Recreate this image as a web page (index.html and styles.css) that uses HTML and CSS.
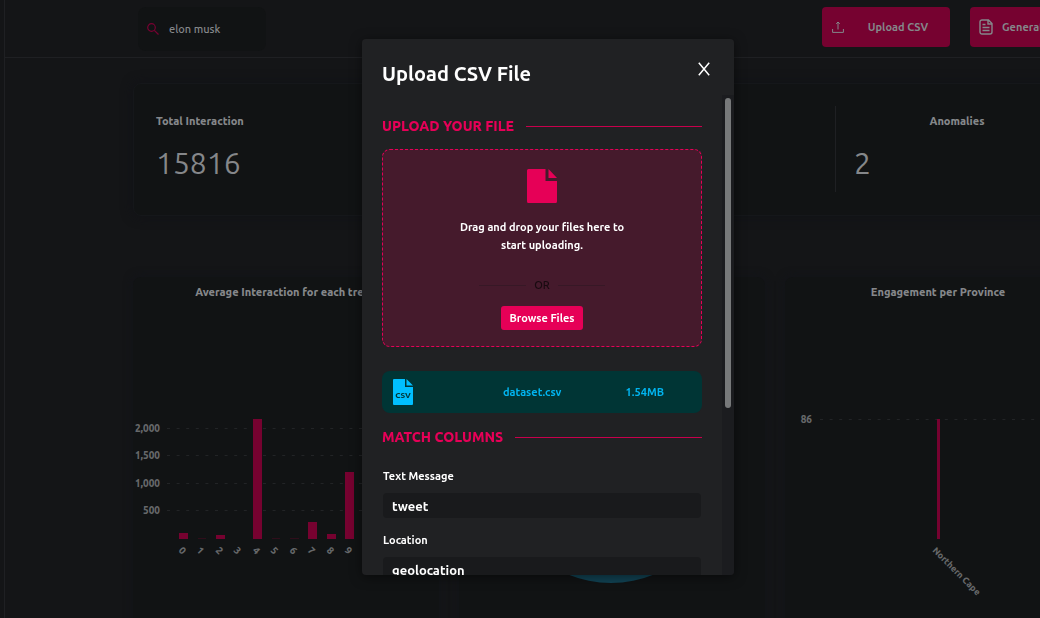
FILE: index.html
```html
<!DOCTYPE html>
<html lang="en">
<head>
<meta charset="utf-8">
<title>Upload CSV File</title>
<link rel="stylesheet" href="styles.css">
</head>
<body>
<div class="app">
  <aside class="rail"></aside>
  <div class="page">
    <header class="topbar">
      <label class="search">
        <svg class="search-icon" viewBox="0 0 12 12" aria-hidden="true"><circle cx="4.5" cy="4.5" r="3.8"/><path d="M7.3 7.3L11.5 11.5"/></svg>
        <input class="search-input" type="text" value="elon musk" aria-label="Search">
      </label>
      <div class="actions">
        <button class="action action-upload" type="button">
          <svg class="upload-icon" viewBox="0 0 12 12" aria-hidden="true"><path d="M.6 8v3.4h10.8V8M6 8.5V1M4.2 2.8L6 1l1.800 1.800"/></svg>
          <span class="action-label">Upload CSV</span>
        </button>
        <button class="action action-report" type="button">
          <svg class="report-icon" viewBox="0 0 14 16" aria-hidden="true"><path d="M3 1h6.500L13 4.500V13a2 2 0 0 1-2 2H3a2 2 0 0 1-2-2V3a2 2 0 0 1 2-2zM9 1v4h4M3.500 5.500h3M3.500 8.500h7M3.500 11.500h7"/></svg>
          <span>Generate Report</span>
        </button>
      </div>
    </header>
    <main class="dashboard">
      <section class="stats">
        <div class="stat"><h3 class="stat-title">Total Interaction</h3><p class="stat-value">15816</p></div>
        <div class="stat stat-anomalies"><h3 class="stat-title">Anomalies</h3><p class="stat-value">2</p></div>
      </section>
      <section class="charts">
        <article class="chart">
          <h3 class="chart-title">Average Interaction for each trend</h3>
          <svg class="plot" viewBox="0 0 306 300" aria-label="Average interaction bar chart">
            <path class="grid-line" d="M34 122.500H306M34 149.500H306M34 177.500H306M34 204.500H306"/>
            <g class="tick tick-end"><text x="27" y="126">2,000</text><text x="27" y="153">1,500</text><text x="27" y="181">1,000</text><text x="27" y="208">500</text></g>
            <path class="bar" d="M46 227h9v6h-9zM83 229h9v4h-9zM120 113h9v120h-9zM175 216h9v17h-9zM194 228h9v5h-9zM212 166h9v67h-9z"/>
            <path class="bar bar-low" d="M139 232h8v1h-8zM157 232h9v1h-9zM65 232h8v1h-8z"/>
            <g class="tick">
              <text transform="translate(45 245) rotate(45)">0</text><text transform="translate(63 245) rotate(45)">1</text><text transform="translate(82 245) rotate(45)">2</text><text transform="translate(100 245) rotate(45)">3</text><text transform="translate(119 245) rotate(45)">4</text><text transform="translate(137 245) rotate(45)">5</text><text transform="translate(156 245) rotate(45)">6</text><text transform="translate(174 245) rotate(45)">7</text><text transform="translate(193 245) rotate(45)">8</text><text transform="translate(211 245) rotate(45)">9</text>
            </g>
          </svg>
        </article>
        <article class="chart">
          <svg class="plot plot-pie" viewBox="0 0 306 340" aria-label="Sentiment pie chart"><circle class="pie" cx="152" cy="192" r="114"/></svg>
        </article>
        <article class="chart">
          <h3 class="chart-title">Engagement per Province</h3>
          <svg class="plot" viewBox="0 0 306 300" aria-label="Engagement per province bar chart">
            <path class="grid-line" d="M35 113.500H306"/>
            <g class="tick tick-end"><text x="27" y="117">86</text></g>
            <path class="bar" d="M152 113h3v120h-3z"/>
            <g class="tick tick-name"><text transform="translate(147 245) rotate(45)">Northern Cape</text></g>
          </svg>
        </article>
      </section>
    </main>
  </div>
</div>

<div class="overlay">
  <section class="modal" role="dialog" aria-modal="true" aria-labelledby="modal-title">
    <header class="modal-head">
      <h2 class="modal-title" id="modal-title">Upload CSV File</h2>
      <button class="close" type="button" aria-label="Close"><svg class="close-icon" viewBox="0 0 12 14" aria-hidden="true"><path d="M.8.8L11.2 13.2M11.2.8L.8 13.2"/></svg></button>
    </header>
    <div class="modal-body">
      <form class="modal-content">
        <h3 class="section-title">UPLOAD YOUR FILE</h3>
        <div class="dropzone">
          <svg class="file-icon" viewBox="0 0 30 34" aria-hidden="true"><path d="M1.500 0H18.500V12H30V32.500a1.500 1.500 0 0 1-1.500 1.500h-27A1.500 1.500 0 0 1 0 32.500v-31A1.500 1.500 0 0 1 1.500 0zM21.500 0L30 9h-8.500z"/></svg>
          <p class="drop-text">Drag and drop your files here to start uploading.</p>
          <div class="or">OR</div>
          <button class="browse" type="button">Browse Files</button>
        </div>
        <div class="file">
          <svg class="csv-icon" viewBox="0 0 20 26" aria-hidden="true"><path d="M1 0h11v8h8v17a1 1 0 0 1-1 1H1a1 1 0 0 1-1-1V1a1 1 0 0 1 1-1zM13.500 0L20 6.500h-6.500z"/><text class="csv-label" x="10" y="19">CSV</text></svg>
          <span class="file-name">dataset.csv</span>
          <span class="file-size">1.54MB</span>
        </div>
        <h3 class="section-title section-match">MATCH COLUMNS</h3>
        <div class="field"><label class="field-label" for="message">Text Message</label><select class="field-select" id="message"><option>tweet</option></select></div>
        <div class="field"><label class="field-label" for="location">Location</label><select class="field-select" id="location"><option>geolocation</option></select></div>
      </form>
      <div class="scroll-track"><div class="scroll-thumb"></div></div>
    </div>
  </section>
</div>
</body>
</html>
```
FILE: styles.css
```css
* { box-sizing: border-box; }
body {
  margin: 0;
  height: 100vh;
  overflow: hidden;
  background: #141517;
  color: #85878a;
  font: 500 11px/18px Ubuntu, "Noto Sans", sans-serif;
}
h2, h3, p { margin: 0; }
button, input, select { font: inherit; color: inherit; border: 0; }
svg { display: block; flex: none; }

.app { display: flex; height: 100vh; overflow: hidden; }
.rail { flex: none; width: 5px; border-right: 1px solid #1f2023; }
.page { flex: 1; min-width: 0; }

.topbar {
  display: flex;
  justify-content: space-between;
  align-items: flex-start;
  height: 58px;
  padding: 7px 0 0 133px;
  border-bottom: 1px solid #1f2023;
}
.search {
  display: flex;
  align-items: center;
  gap: 10px;
  width: 128px;
  height: 44px;
  padding: 0 9px;
  border-radius: 8px;
  background: #111314;
}
.search-icon { width: 12px; height: 12px; fill: none; stroke: #780232; stroke-width: 1.2; }
.search-input { min-width: 0; flex: 1; padding: 0; background: none; outline: 0; }
.actions { display: flex; gap: 20px; width: 218px; }
.action {
  display: flex;
  flex: none;
  align-items: center;
  height: 40px;
  border-radius: 4px;
  background: #760230;
  font-weight: 600;
  white-space: nowrap;
}
.action-upload { width: 128px; padding: 0 10px; }
.action-label { flex: 1; padding-left: 12px; }
.action-report { width: 148px; gap: 9px; padding: 0 9px; }
.upload-icon { width: 12px; height: 12px; fill: none; stroke: #85878a; }
.report-icon { width: 14px; height: 16px; fill: none; stroke: #85878a; stroke-width: 1.4; }

.dashboard { padding: 25px 0 0 128px; }
.stats {
  display: grid;
  grid-template-columns: 701px 257px;
  width: 958px;
  height: 133px;
  padding-top: 22px;
  border: 1px solid #15171a;
  border-radius: 8px;
  background: #111314;
  box-shadow: 0 0 12px #111217;
}
.stat { height: 86px; padding: 6px 22px; }
.stat-anomalies { padding: 6px 18px; border-left: 1px solid #1f2023; }
.stat-anomalies .stat-title { padding-right: 14px; text-align: center; }
.stat-title, .chart-title { font-size: 11px; line-height: 18px; font-weight: 800; }
.stat-value { margin-top: 13px; font-size: 30px; line-height: 40px; font-weight: 400; }

.charts { display: grid; grid-template-columns: repeat(3, 306px); gap: 20px; margin-top: 61px; }
.chart {
  height: 360px;
  padding-top: 6px;
  border-radius: 8px;
  background: #111314;
  box-shadow: 0 0 10px #12141a;
}
.chart-title { text-align: center; white-space: nowrap; }
.plot { display: block; width: 100%; margin-top: 5px; }
.plot-pie { margin-top: -6px; }
.pie { fill: #114354; }
.grid-line { fill: none; stroke: #222426; stroke-dasharray: 3 6.600; }
.bar { fill: #760230; }
.bar-low { opacity: .3; }
.tick { fill: #66686a; font-size: 10px; font-weight: 800; }
.tick-name { font-size: 9px; }
.tick-end { text-anchor: end; }

.overlay {
  position: fixed;
  inset: 0;
  display: flex;
  justify-content: center;
  padding: 39px 0 43px 56px;
}
.modal {
  display: flex;
  flex-direction: column;
  width: 372px;
  overflow: hidden;
  border-radius: 4px;
  background: #202123;
  color: #fff;
  box-shadow: 0 2px 12px rgba(0, 0, 0, .5);
}
.modal-head {
  display: flex;
  flex: none;
  justify-content: space-between;
  align-items: flex-start;
  height: 56px;
  padding: 20px 24px 0 20px;
}
.modal-title { font-size: 20px; line-height: 29px; font-weight: 700; }
.close { padding: 3px 0; background: none; }
.close-icon { width: 12px; height: 14px; fill: none; stroke: #fff; stroke-width: 1.5; }
.modal-body { display: flex; flex: 1; min-height: 0; }
.modal-content { flex: 1; overflow: hidden; padding: 21px 20px 0; }
.scroll-track { flex: none; width: 12px; padding: 3px; background: #1b1c1f; }
.scroll-thumb { height: 310px; border-radius: 3px; background: #77797a; }

.section-title {
  display: flex;
  align-items: center;
  gap: 12px;
  color: #e60057;
  font-size: 14px;
  line-height: 20px;
  font-weight: 800;
}
.section-title::after { content: ""; flex: 1; height: 1px; background: #c8004c; }
.dropzone {
  display: flex;
  flex-direction: column;
  align-items: center;
  height: 198px;
  margin-top: 13px;
  padding-top: 19px;
  border: 1px dashed #e60057;
  border-radius: 8px;
  background: #451a2c;
}
.file-icon { width: 30px; height: 34px; fill: #e60057; }
.drop-text { width: 180px; margin-top: 15px; font-weight: 600; text-align: center; }
.or {
  display: flex;
  align-items: center;
  gap: 8px;
  width: 126px;
  margin-top: 22px;
  color: #180a10;
}
.or::before, .or::after { content: ""; flex: 1; height: 1px; background: #371826; }
.browse { height: 24px; margin-top: 12px; padding: 0 8px; border-radius: 3px; background: #e60057; font-weight: 600; }
.file {
  display: flex;
  align-items: center;
  height: 42px;
  margin-top: 24px;
  padding: 0 38px 0 11px;
  border-radius: 8px;
  background: #003535;
  color: #00b4f0;
  font-weight: 600;
}
.csv-icon { width: 20px; height: 26px; fill: #00bfff; }
.csv-label { fill: #003535; font-size: 8px; font-weight: 800; text-anchor: middle; }
.file-name { margin-left: 90px; }
.file-size { margin-left: auto; }
.section-match { margin-top: 14px; }
.field { display: flex; flex-direction: column; gap: 8px; margin: 20px 1px 0; }
.field + .field { margin-top: 13px; }
.field-label { align-self: flex-start; font-weight: 600; }
.field-select {
  height: 25px;
  padding: 0 9px;
  border-radius: 4px;
  background: #191a1c;
  font-size: 13px;
  font-weight: 600;
  appearance: none;
}
```
